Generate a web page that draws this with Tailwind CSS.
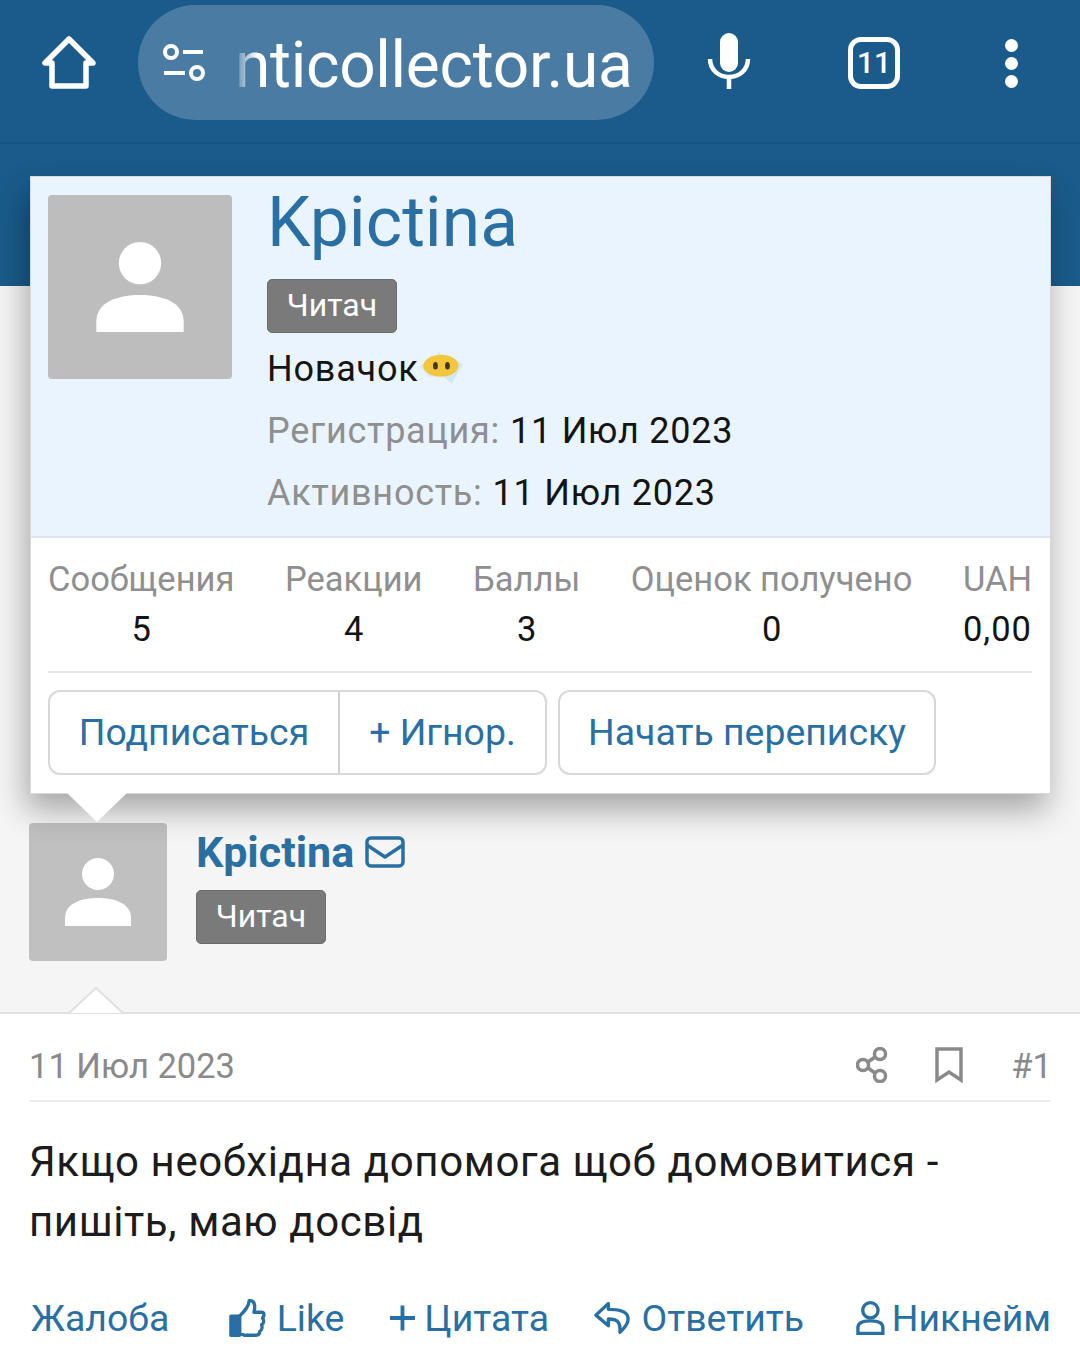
<!DOCTYPE html>
<html lang="en">
<head>
<meta charset="UTF-8" />
<title>Kpictina</title>
<script src="https://cdn.jsdelivr.net/npm/@tailwindcss/browser@4"></script>
</head>
<body class="relative w-[1080px] h-[1372px] overflow-hidden bg-white font-['Roboto',sans-serif] text-[#141414]">

<!-- Browser bar -->
<header class="h-[144px] bg-[#1a5b8b] flex items-start text-white border-b-2 border-[#185481]">
    <svg class="w-[56px] h-[56px] ml-[41px] mt-[35px]" viewBox="0 0 56 56" fill="none" stroke="white" stroke-width="5.5" stroke-linejoin="round"><path d="M28 4 L4 28 H11 V51 H45 V28 H52 Z"/></svg>
    <div class="relative ml-[41px] mt-[5px] w-[516px] h-[115px] rounded-full bg-[#4a7ca3] flex items-center">
        <svg class="w-[46px] h-[38px] ml-[23px]" viewBox="0 0 46 38" fill="none" stroke="white" stroke-width="4"><circle cx="10" cy="8" r="6"/><path d="M22 8 H42 M3 29 H24"/><circle cx="36" cy="29" r="6"/></svg>
        <span class="ml-[28px] pt-[6px] text-[64px] tracking-[-0.3px] leading-none whitespace-nowrap">nticollector.ua</span>
        <span class="absolute left-[95px] top-[30px] w-[24px] h-[60px] bg-gradient-to-r from-[#4a7ca3] to-transparent"></span>
    </div>
    <svg class="w-[44px] h-[58px] ml-[53px] mt-[32px]" viewBox="0 0 44 58"><rect x="13" y="1" width="18" height="39" rx="9" fill="white"/><path d="M3 27 C3 38 12 45 22 45 C32 45 41 38 41 27 M22 45 V57" fill="none" stroke="white" stroke-width="4.5"/></svg>
    <div class="ml-[97px] mt-[37px] w-[52px] h-[52px] border-[5px] border-white rounded-[13px] flex items-center justify-center text-[30px] font-medium leading-none">11</div>
    <div class="ml-[105px] mt-[39px] flex flex-col gap-[5px]">
        <span class="w-[13px] h-[13px] rounded-full bg-white"></span>
        <span class="w-[13px] h-[13px] rounded-full bg-white"></span>
        <span class="w-[13px] h-[13px] rounded-full bg-white"></span>
    </div>
</header>
<div class="h-[142px] bg-[#1a5b8b]"></div>

<!-- Post author -->
<section class="relative h-[728px] bg-[#f5f5f5] border-b-2 border-[#e0e0e0] flex items-start pl-[29px] pt-[537px]">
    <div class="w-[138px] h-[138px] rounded-[4px] bg-[#c0c0c0] flex items-center justify-center">
        <svg class="w-[68px] h-[68px]" viewBox="0 0 68 68" fill="white"><circle cx="34" cy="16" r="16"/><path d="M1 68 V60 C1 45 18 40 34 40 C50 40 67 45 67 60 V68 Z"/></svg>
    </div>
    <div class="ml-[29px] flex flex-col items-start">
        <div class="flex items-center h-[58px]">
            <span class="text-[43px] font-bold text-[#2a6fa3] leading-none">Kpictina</span>
            <svg class="w-[40px] h-[32px] ml-[11px]" viewBox="0 0 40 32" fill="none" stroke="#2a6fa3" stroke-width="3.5" stroke-linejoin="round"><rect x="2" y="2" width="36" height="28" rx="4"/><path d="M2 9 L20 21 L38 9"/></svg>
        </div>
        <span class="mt-[9px] w-[130px] h-[54px] pb-[2px] rounded-[5px] bg-[#7a7a7a] border border-[#6b6b6b] text-white text-[32px] flex items-center justify-center">Читач</span>
    </div>
    <!-- post arrow -->
    <svg class="absolute left-[68px] bottom-[-2px] w-[56px] h-[27px]" viewBox="0 0 56 27"><path d="M1 26 L28 1 L55 26" fill="white" stroke="#e0e0e0" stroke-width="2"/></svg>
</section>

<!-- Post body -->
<main class="px-[29px]">
    <div class="h-[88px] pt-[16px] flex items-center border-b-2 border-[#ececec] text-[#8a8a8a] text-[34.5px]">
        <span class="pt-[3px]">11 Июл 2023</span>
        <svg class="w-[32px] h-[36px] ml-auto" viewBox="0 0 32 36" fill="none" stroke="#8a8a8a" stroke-width="3.5"><circle cx="24" cy="7" r="5.5"/><circle cx="7" cy="18" r="5.5"/><circle cx="24" cy="29" r="5.5"/><path d="M12 15 L19 10 M12 21 L19 26"/></svg>
        <svg class="w-[28px] h-[36px] ml-[47px]" viewBox="0 0 28 36" fill="none" stroke="#8a8a8a" stroke-width="3.5"><path d="M2 2 H26 V33 L14 25 L2 33 Z"/></svg>
        <span class="ml-[48px] mr-[-1px] pt-[3px]">#1</span>
    </div>
    <p class="mt-[30px] text-[42px] leading-[60px] tracking-[0.6px] text-[#1c1c1c]">Якщо необхідна допомога щоб домовитися -<br>пишіть, маю досвід</p>
    <div class="mt-[36px] flex items-center text-[37.4px] text-[#2a6fa3] whitespace-nowrap h-[60px]">
        <span class="ml-[2px]">Жалоба</span>
        <svg class="w-[38px] h-[40px] ml-[60px]" viewBox="0 0 38 40" fill="none" stroke="#2a6fa3" stroke-width="3.5" stroke-linejoin="round"><path d="M11 18 C16 13 21 8 21 2 C26 1 28 6 26 14 H34 C37 14 37 18 35 20 C37 23 36 26 34 27 C35 30 34 33 32 34 C32 37 30 38 27 38 H16 L11 36 Z"/><rect x="2" y="18" width="9" height="20" fill="#2a6fa3"/></svg>
        <span class="ml-[11px]">Like</span>
        <svg class="w-[26px] h-[26px] ml-[46px]" viewBox="0 0 26 26" stroke="#2a6fa3" stroke-width="4"><path d="M13 0 V26 M0 13 H26"/></svg>
        <span class="ml-[9px]">Цитата</span>
        <svg class="w-[38px] h-[36px] ml-[45px]" viewBox="0 0 38 36" fill="none" stroke="#2a6fa3" stroke-width="3.5" stroke-linejoin="round"><path d="M15 3 L2 15 L15 26 V19 C24 19 28 22 27 33 C33 27 37 22 35 16 C33 10 24 9 15 9 Z"/></svg>
        <span class="ml-[11px]">Ответить</span>
        <svg class="w-[30px] h-[36px] ml-[52px]" viewBox="0 0 30 36" fill="none" stroke="#2a6fa3" stroke-width="3.5"><circle cx="15" cy="10" r="8"/><path d="M2 34 V28 C2 23 7 21 15 21 C23 21 28 23 28 28 V34 Z"/></svg>
        <span class="ml-[7px]">Никнейм</span>
    </div>
</main>

<!-- Member tooltip -->
<div class="absolute left-[30px] top-[176px] w-[1021px] h-[618px] bg-white border border-[#d8d8d8] shadow-[-4px_16px_30px_rgba(0,0,0,0.32)]">
    <div class="h-[361px] bg-[#e9f4fe] border-b-2 border-[#dfe5ea] flex pl-[17px] pt-[18px]">
        <div class="w-[184px] h-[184px] rounded-[4px] bg-[#bdbdbd] flex items-center justify-center">
            <svg class="w-[90px] h-[90px]" viewBox="0 0 68 68" fill="white"><circle cx="34" cy="16" r="16"/><path d="M1 68 V60 C1 45 18 40 34 40 C50 40 67 45 67 60 V68 Z"/></svg>
        </div>
        <div class="ml-[35px] flex flex-col items-start">
            <span class="text-[69.5px] text-[#2a6fa3] leading-[56px] h-[84px]">Kpictina</span>
            <span class="w-[130px] h-[54px] pb-[2px] rounded-[5px] bg-[#7a7a7a] border border-[#6b6b6b] text-white text-[32px] flex items-center justify-center">Читач</span>
            <div class="mt-[5px] h-[62px] flex items-center text-[36px] tracking-[0.8px]">Новачок
                <svg class="w-[46px] h-[40px]" viewBox="0 0 42 36"><path d="M1 16 L8 9 L14 10 L18 2 L22 9 L30 7 L40 14 L36 20 L30 32 L22 24 L10 25 Z" fill="#d3e8ee"/><ellipse cx="20" cy="15" rx="16" ry="10" fill="#f3c73d"/><ellipse cx="15" cy="15" rx="2.2" ry="3.5" fill="#4a3512"/><ellipse cx="26" cy="15" rx="2.2" ry="3.5" fill="#4a3512"/></svg>
            </div>
            <div class="h-[62px] flex items-center text-[36px] tracking-[0.75px]"><span class="text-[#8f8f8f]">Регистрация:</span><span class="ml-[10px]">11 Июл 2023</span></div>
            <div class="h-[62px] flex items-center text-[36px] tracking-[0.75px]"><span class="text-[#8f8f8f]">Активность:</span><span class="ml-[10px]">11 Июл 2023</span></div>
        </div>
    </div>
    <div class="ml-[17px] mr-[18px] h-[135px] border-b-2 border-[#e6e6e6] flex justify-between pt-[16px] text-[34.5px] text-center leading-[50px]">
        <div><div class="text-[#8f8f8f]">Сообщения</div><div>5</div></div>
        <div><div class="text-[#8f8f8f]">Реакции</div><div>4</div></div>
        <div><div class="text-[#8f8f8f]">Баллы</div><div>3</div></div>
        <div><div class="text-[#8f8f8f]">Оценок получено</div><div>0</div></div>
        <div><div class="text-[#8f8f8f]">UAH</div><div class="tracking-[1px]">0,00</div></div>
    </div>
    <div class="ml-[17px] mt-[17px] flex gap-[11px] text-[37.4px] text-[#2a6fa3]">
        <div class="flex h-[85px] border-2 border-[#d8d8d8] rounded-[12px]">
            <span class="w-[290px] flex items-center justify-center border-r-2 border-[#d0d0d0]">Подписаться</span>
            <span class="w-[205px] flex items-center justify-center">+ Игнор.</span>
        </div>
        <span class="w-[378px] h-[85px] border-2 border-[#d8d8d8] rounded-[12px] flex items-center justify-center">Начать переписку</span>
    </div>
    <!-- arrow -->
    <svg class="absolute left-[36px] top-[616px] w-[60px] h-[30px]" viewBox="0 0 60 30"><path d="M0 0 H60 L30 29 Z" fill="white"/></svg>
</div>
</body>
</html>
